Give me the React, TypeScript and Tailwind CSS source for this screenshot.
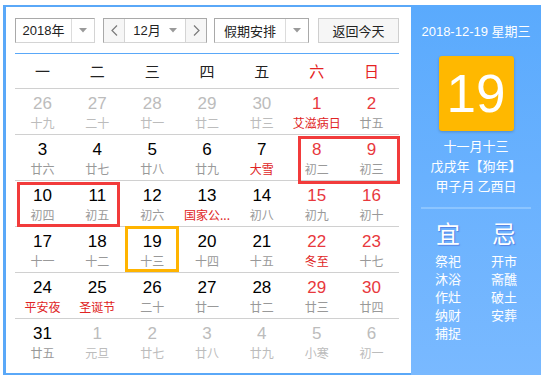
import React from "react";

type Cell = { d: number; l: string; dim?: boolean; redNum?: boolean; fest?: boolean };

const rows: Cell[][] = [
  [
    { d: 26, l: "十九", dim: true },
    { d: 27, l: "二十", dim: true },
    { d: 28, l: "廿一", dim: true },
    { d: 29, l: "廿二", dim: true },
    { d: 30, l: "廿三", dim: true },
    { d: 1, l: "艾滋病日", redNum: true, fest: true },
    { d: 2, l: "廿五", redNum: true },
  ],
  [
    { d: 3, l: "廿六" },
    { d: 4, l: "廿七" },
    { d: 5, l: "廿八" },
    { d: 6, l: "廿九" },
    { d: 7, l: "大雪", fest: true },
    { d: 8, l: "初二", redNum: true },
    { d: 9, l: "初三", redNum: true },
  ],
  [
    { d: 10, l: "初四" },
    { d: 11, l: "初五" },
    { d: 12, l: "初六" },
    { d: 13, l: "国家公...", fest: true },
    { d: 14, l: "初八" },
    { d: 15, l: "初九", redNum: true },
    { d: 16, l: "初十", redNum: true },
  ],
  [
    { d: 17, l: "十一" },
    { d: 18, l: "十二" },
    { d: 19, l: "十三" },
    { d: 20, l: "十四" },
    { d: 21, l: "十五" },
    { d: 22, l: "冬至", redNum: true, fest: true },
    { d: 23, l: "十七", redNum: true },
  ],
  [
    { d: 24, l: "平安夜", fest: true },
    { d: 25, l: "圣诞节", fest: true },
    { d: 26, l: "二十" },
    { d: 27, l: "廿一" },
    { d: 28, l: "廿二" },
    { d: 29, l: "廿三", redNum: true },
    { d: 30, l: "廿四", redNum: true },
  ],
  [
    { d: 31, l: "廿五" },
    { d: 1, l: "元旦", dim: true },
    { d: 2, l: "廿七", dim: true },
    { d: 3, l: "廿八", dim: true },
    { d: 4, l: "廿九", dim: true },
    { d: 5, l: "小寒", dim: true },
    { d: 6, l: "初一", dim: true },
  ],
];

const weekdays = ["一", "二", "三", "四", "五", "六", "日"];

const Caret = () => (
  <svg width="8" height="5" viewBox="0 0 8 5">
    <path d="M0 0 L8 0 L4 4.5 Z" fill="#9a9a9a" />
  </svg>
);

const Chevron = ({ dir }: { dir: "l" | "r" }) => (
  <svg width="7" height="11" viewBox="0 0 7 11">
    <path
      d={dir === "l" ? "M6 0.5 L1 5.5 L6 10.5" : "M1 0.5 L6 5.5 L1 10.5"}
      fill="none"
      stroke="#7a7a7a"
      strokeWidth="1.2"
    />
  </svg>
);

export default function App() {
  const num = "font-['Liberation_Sans','Noto_Sans_CJK_SC',sans-serif]";
  const cjk = "font-['Noto_Sans_CJK_SC',sans-serif]";
  return (
    <div className={`w-[547px] h-[383px] bg-white pt-[5px] pl-[3px] ${cjk}`}>
      <div className="flex w-[538px] h-[370px] border-l-[3px] border-y-2 border-[#5aa8f8]">
        {/* left calendar */}
        <div className="w-[405px] pl-[9px] pr-[12px] pt-[11px]">
          {/* controls */}
          <div className="flex h-[25px] text-[13px] text-[#222]">
            <div className="flex w-[80px] border border-[#a9a9a9] border-b-[#d4d4d4] border-r-[#d4d4d4]">
              <div className={`w-[55px] flex items-center justify-center ${num}`}>2018年</div>
              <div className="flex-1 border-l border-[#dcdcdc] flex items-center justify-center">
                <Caret />
              </div>
            </div>
            <div className="ml-[8px] flex w-[104px] border border-[#a9a9a9] border-b-[#d4d4d4]">
              <div className="w-[21px] bg-[#f6f6f6] flex items-center justify-center border-r border-[#d4d4d4]">
                <Chevron dir="l" />
              </div>
              <div className={`w-[60px] flex items-center justify-center gap-[8px] ${num}`}>
                <span>12月</span>
                <Caret />
              </div>
              <div className="flex-1 bg-[#f6f6f6] flex items-center justify-center border-l border-[#d4d4d4]">
                <Chevron dir="r" />
              </div>
            </div>
            <div className="ml-[7px] flex w-[95px] border border-[#a9a9a9] border-b-[#d4d4d4]">
              <div className="w-[70px] flex items-center justify-center">假期安排</div>
              <div className="flex-1 border-l border-[#dcdcdc] flex items-center justify-center">
                <Caret />
              </div>
            </div>
            <div className="ml-[9px] w-[81px] border border-[#cfcfcf] bg-[#f6f6f6] flex items-center justify-center">
              返回今天
            </div>
          </div>
          <div className="mt-[10px] h-px bg-[#5aa8f8]" />
          {/* weekday header */}
          <div className="grid grid-cols-7 h-[35px] border-b border-[#d0d0d0] text-[15px] text-[#222]">
            {weekdays.map((w, i) => (
              <div
                key={w}
                className={`flex items-center justify-center ${i >= 5 ? "text-[#e52222]" : ""}`}
              >
                {w}
              </div>
            ))}
          </div>
          {/* body */}
          <div className="relative">
            {rows.map((r, ri) => (
              <div
                key={ri}
                className={`grid grid-cols-7 h-[46px] ${ri < rows.length - 1 ? "border-b border-[#d0d0d0]" : ""}`}
              >
                {r.map((c, ci) => (
                  <div key={ci} className="flex flex-col items-center pt-[5px]">
                    <div
                      className={`text-[17px] leading-[20px] ${num} ${
                        c.dim ? "text-[#bcbcbc]" : c.redNum ? "text-[#e8383d]" : "text-black"
                      }`}
                    >
                      {c.d}
                    </div>
                    <div
                      className={`mt-[1px] text-[12px] leading-[16px] whitespace-nowrap ${
                        c.dim ? "text-[#bcbcbc]" : c.fest ? "text-[#e02424]" : "text-[#999]"
                      }`}
                    >
                      {c.l}
                    </div>
                  </div>
                ))}
              </div>
            ))}
            <div className="absolute left-[283px] top-[47px] w-[102px] h-[48px] border-[3px] border-[#f23b3b]" />
            <div className="absolute left-[2px] top-[93px] w-[103px] h-[45px] border-[3px] border-[#f23b3b]" />
            <div className="absolute left-[110px] top-[137px] w-[54px] h-[46px] border-[3px] border-[#ffb400]" />
          </div>
        </div>
        {/* right panel */}
        <div className="-my-[2px] flex-1 bg-gradient-to-b from-[#5aaafd] to-[#79b9ff] text-white flex flex-col items-center pt-[18px]">
          <div className={`text-[13px] leading-[18px] ${num}`}>2018-12-19 星期三</div>
          <div
            className={`mt-[15px] w-[75px] h-[75px] rounded-[3px] bg-[#ffb800] shadow-[0_1px_3px_rgba(0,0,0,0.2)] flex items-center justify-center text-[53px] leading-none ${num}`}
          >
            19
          </div>
          <div className="mt-[5px] text-[13px] leading-[20px] text-center">
            <div>十一月十三</div>
            <div>戊戌年【狗年】</div>
            <div>甲子月 乙酉日</div>
          </div>
          <div className="mt-[11px] w-[110px] h-[2px] bg-[#8cc5ff]" />
          <div className="mt-[10px] flex">
            <div className="w-[56px] flex flex-col items-center">
              <div className="text-[24px] leading-[28px] [text-shadow:1px_1px_1px_rgba(60,80,200,0.5)]">宜</div>
              <div className="mt-[5px] text-[13px] leading-[18px] text-center">
                <div>祭祀</div>
                <div>沐浴</div>
                <div>作灶</div>
                <div>纳财</div>
                <div>捕捉</div>
              </div>
            </div>
            <div className="w-[56px] flex flex-col items-center">
              <div className="text-[24px] leading-[28px] [text-shadow:1px_1px_1px_rgba(60,80,200,0.5)]">忌</div>
              <div className="mt-[5px] text-[13px] leading-[18px] text-center">
                <div>开市</div>
                <div>斋醮</div>
                <div>破土</div>
                <div>安葬</div>
              </div>
            </div>
          </div>
        </div>
      </div>
    </div>
  );
}
